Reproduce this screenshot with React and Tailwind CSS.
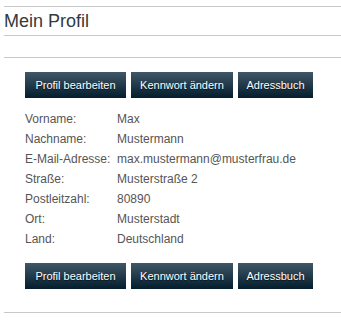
import React from 'react';

const fields = [
  ['Vorname:', 'Max'],
  ['Nachname:', 'Mustermann'],
  ['E-Mail-Adresse:', 'max.mustermann@musterfrau.de'],
  ['Straße:', 'Musterstraße 2'],
  ['Postleitzahl:', '80890'],
  ['Ort:', 'Musterstadt'],
  ['Land:', 'Deutschland'],
];

const Buttons = () => (
  <div className="flex gap-[5px] ml-[21px]">
    <button className="w-[101px] h-[26px] bg-linear-to-b from-[#405767] to-[#041e2d] text-white text-[11px] [text-shadow:0_1px_1px_rgba(0,0,0,0.6)]">
      Profil bearbeiten
    </button>
    <button className="w-[102px] h-[26px] bg-linear-to-b from-[#405767] to-[#041e2d] text-white text-[11px] [text-shadow:0_1px_1px_rgba(0,0,0,0.6)]">
      Kennwort ändern
    </button>
    <button className="w-[75px] h-[26px] bg-linear-to-b from-[#405767] to-[#041e2d] text-white text-[11px] [text-shadow:0_1px_1px_rgba(0,0,0,0.6)]">
      Adressbuch
    </button>
  </div>
);

export default function App() {
  return (
    <div className="w-[341px] h-[320px] bg-white pt-[6px] pl-[4px] font-['Liberation_Sans',Arial,sans-serif]">
      <div className="border-t border-[#c8c8c8]" />
      <h1 className="h-[28px] leading-[28px] text-[18px] text-[#333a40]">Mein Profil</h1>
      <div className="border-t border-[#c8c8c8]" />
      <div className="h-[21px]" />
      <div className="border-t border-[#c8c8c8]" />

      <div className="mt-[14px]">
        <Buttons />
      </div>

      <div className="mt-[11px] ml-[21px] text-[12px] text-[#555]">
        {fields.map(([label, value]) => (
          <div key={label} className="flex h-[20px] leading-[20px]">
            <span className="w-[92px]">{label}</span>
            <span>{value}</span>
          </div>
        ))}
      </div>

      <div className="mt-[14px]">
        <Buttons />
      </div>

      <div className="mt-[23px] border-t border-[#c8c8c8]" />
    </div>
  );
}
